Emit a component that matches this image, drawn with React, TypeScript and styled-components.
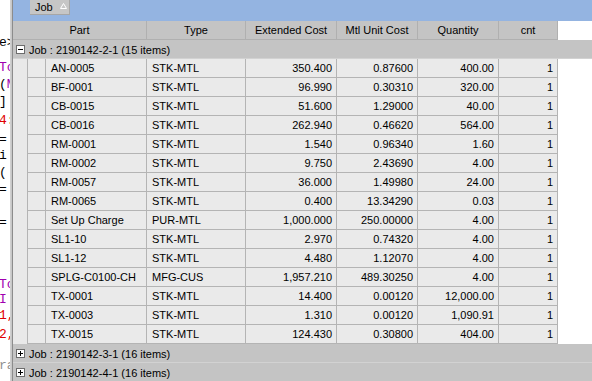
import styled, { createGlobalStyle } from "styled-components";

const GlobalStyle = createGlobalStyle`
  html, body { margin: 0; padding: 0; background: #fff; }
  * { box-sizing: border-box; }
`;

const Screen = styled.div`
  width: 592px;
  height: 381px;
  display: flex;
  overflow: hidden;
  font-family: "Liberation Sans", Arial, sans-serif;
  font-size: 11px;
  color: #000;
`;

const CodeStrip = styled.div`
  width: 10px;
  flex: none;
  overflow: hidden;
  background: #fff;
  font-family: "Liberation Mono", monospace;
  font-size: 13px;
  display: flex;
  flex-direction: column;
`;

const CodeLine = styled.div<{ $h: number; $color?: string }>`
  height: ${(p) => p.$h}px;
  line-height: 17px;
  display: flex;
  align-items: flex-end;
  white-space: pre;
  color: ${(p) => p.$color || "#000"};
  margin-left: -1px;
`;

const Accent = styled.span`
  color: #a000b0;
`;

const Divider = styled.div`
  width: 3px;
  flex: none;
  background: linear-gradient(to right, #d4d4d4, #c4c4c4 66%, #8c8c8c 66%);
`;

const Grid = styled.div`
  flex: 1;
  display: flex;
  flex-direction: column;
  background: #fff;
`;

const GroupPanel = styled.div`
  height: 21px;
  flex: none;
  background: #94b4e1;
  padding-left: 17px;
`;

const Chip = styled.div`
  width: 40px;
  height: 15px;
  background: #c6c6c6;
  border-right: 1px solid #a6a6a6;
  border-bottom: 1px solid #a6a6a6;
  display: flex;
  align-items: center;
  padding-left: 5px;
  gap: 7px;
`;

const SortArrow = styled.svg`
  width: 7px;
  height: 6px;
  margin-top: -2px;
`;

const HeaderRow = styled.div`
  height: 19px;
  flex: none;
  display: grid;
  grid-template-columns: 134px 99px 91px 81px 81px 59px;
`;

const HeaderCell = styled.div`
  background: #c4c4c4;
  border-right: 1px solid #b0b0b0;
  border-bottom: 1px solid #b0b0b0;
  display: flex;
  align-items: center;
  justify-content: center;
`;

const GroupRow = styled.div<{ $h?: number }>`
  height: ${(p) => p.$h || 19}px;
  flex: none;
  background: #c4c4c4;
  border-bottom: 1px solid #d2d2d2;
  display: flex;
  align-items: center;
  padding: 2px 0 0 3px;
  gap: 4px;
`;

const Toggle = styled.div`
  width: 9px;
  height: 9px;
  background: #fff;
  border: 1px solid #6c6c6c;
  display: flex;
  align-items: center;
  justify-content: center;
  margin-top: -1px;
`;

const DataRow = styled.div`
  height: 19px;
  flex: none;
  display: grid;
  grid-template-columns: 15px 18px 101px 99px 91px 81px 81px 59px;
`;

const Indent = styled.div`
  background: #e9e9e9;
  border-right: 1px solid #b4b4b4;
`;

const Cell = styled.div<{ $right?: boolean }>`
  background: #eaeaea;
  border-right: 1px solid #b4b4b4;
  border-bottom: 1px solid #b4b4b4;
  display: flex;
  align-items: center;
  justify-content: ${(p) => (p.$right ? "flex-end" : "flex-start")};
  padding: 0 4px 0 5px;
  white-space: nowrap;
  overflow: hidden;
`;

// bits of an editor window peeking out behind the grid
const codeLines: [number, React.ReactNode, string?][] = [
  [51, "e>"],
  [25, "To", "#a000b0"],
  [17, <>(<Accent>M</Accent></>],
  [17, "]"],
  [19, "4:", "#e00000"],
  [19, "="],
  [16, "i"],
  [17, "("],
  [17, "="],
  [33, "="],
  [62, "To", "#a000b0"],
  [15, "I", "#a000b0"],
  [16, "1,", "#e00000"],
  [19, "2,", "#e00000"],
  [31, "ra", "#909090"],
];

const rows: [string, string, string, string, string, string][] = [
  ["AN-0005", "STK-MTL", "350.400", "0.87600", "400.00", "1"],
  ["BF-0001", "STK-MTL", "96.990", "0.30310", "320.00", "1"],
  ["CB-0015", "STK-MTL", "51.600", "1.29000", "40.00", "1"],
  ["CB-0016", "STK-MTL", "262.940", "0.46620", "564.00", "1"],
  ["RM-0001", "STK-MTL", "1.540", "0.96340", "1.60", "1"],
  ["RM-0002", "STK-MTL", "9.750", "2.43690", "4.00", "1"],
  ["RM-0057", "STK-MTL", "36.000", "1.49980", "24.00", "1"],
  ["RM-0065", "STK-MTL", "0.400", "13.34290", "0.03", "1"],
  ["Set Up Charge", "PUR-MTL", "1,000.000", "250.00000", "4.00", "1"],
  ["SL1-10", "STK-MTL", "2.970", "0.74320", "4.00", "1"],
  ["SL1-12", "STK-MTL", "4.480", "1.12070", "4.00", "1"],
  ["SPLG-C0100-CH", "MFG-CUS", "1,957.210", "489.30250", "4.00", "1"],
  ["TX-0001", "STK-MTL", "14.400", "0.00120", "12,000.00", "1"],
  ["TX-0003", "STK-MTL", "1.310", "0.00120", "1,090.91", "1"],
  ["TX-0015", "STK-MTL", "124.430", "0.30800", "404.00", "1"],
];

const ToggleIcon = ({ open }: { open: boolean }) => (
  <Toggle>
    <svg width="7" height="7" viewBox="0 0 7 7">
      <path d="M1 3.5h5" stroke="#000" strokeWidth="1" shapeRendering="crispEdges" />
      {!open && <path d="M3.5 1v5" stroke="#000" strokeWidth="1" shapeRendering="crispEdges" />}
    </svg>
  </Toggle>
);

export default function App() {
  return (
    <>
      <GlobalStyle />
      <Screen>
        <CodeStrip>
          {codeLines.map(([h, t, c], i) => (
            <CodeLine key={i} $h={h} $color={c}>
              {t}
            </CodeLine>
          ))}
        </CodeStrip>
        <Divider />
        <Grid>
          <GroupPanel>
            <Chip>
              Job
              <SortArrow viewBox="0 0 7 6">
                <path d="M3.5 0.5L6.5 5.5H0.5Z" fill="none" stroke="#fff" strokeWidth="1" />
              </SortArrow>
            </Chip>
          </GroupPanel>
          <HeaderRow>
            <HeaderCell>Part</HeaderCell>
            <HeaderCell>Type</HeaderCell>
            <HeaderCell>Extended Cost</HeaderCell>
            <HeaderCell>Mtl Unit Cost</HeaderCell>
            <HeaderCell>Quantity</HeaderCell>
            <HeaderCell>cnt</HeaderCell>
          </HeaderRow>
          <GroupRow>
            <ToggleIcon open />
            Job : 2190142-2-1 (15 items)
          </GroupRow>
          {rows.map((r) => (
            <DataRow key={r[0]}>
              <Indent />
              <Cell />
              <Cell>{r[0]}</Cell>
              <Cell>{r[1]}</Cell>
              <Cell $right>{r[2]}</Cell>
              <Cell $right>{r[3]}</Cell>
              <Cell $right>{r[4]}</Cell>
              <Cell $right>{r[5]}</Cell>
            </DataRow>
          ))}
          <GroupRow>
            <ToggleIcon open={false} />
            Job : 2190142-3-1 (16 items)
          </GroupRow>
          <GroupRow $h={19}>
            <ToggleIcon open={false} />
            Job : 2190142-4-1 (16 items)
          </GroupRow>
        </Grid>
      </Screen>
    </>
  );
}
